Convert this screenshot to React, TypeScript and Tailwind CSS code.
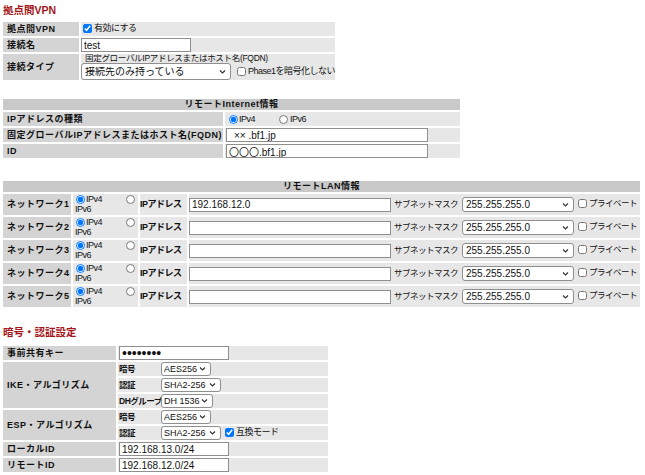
import React from 'react';

// shared cell styles
const lab = 'bg-[#d4d4d4] pl-[4px] text-[9px] font-bold tracking-[0.5px] leading-none align-middle whitespace-nowrap';
const val = 'bg-[#e7e7e7] align-middle text-[9px] tracking-[-0.5px] leading-none';
const head = 'bg-[#c9c9c9] h-[11px] text-center text-[9px] font-bold tracking-[0.5px] leading-none align-middle';
const box = 'block border border-[#8f8f8f] bg-white px-[2px] text-[10px] tracking-normal leading-none outline-none';
const title = 'flex items-center pl-[2px] text-[10.5px] font-bold text-[#a4161a] leading-none';
const sub = 'w-[43px] pl-[1px] text-[8.5px] tracking-[-0.5px] font-bold whitespace-nowrap';

const Chevron = () => (
  <svg width="7" height="5" viewBox="0 0 7 5" className="absolute right-[5px] top-1/2 -translate-y-1/2 pointer-events-none">
    <path d="M1 1l2.5 2.5L6 1" fill="none" stroke="#333" strokeWidth="1.2" />
  </svg>
);

function Sel({ value, className, small = false }: { value: string; className: string; small?: boolean }) {
  return (
    <span className={`relative inline-block shrink-0 ${className}`}>
      <select
        defaultValue={value}
        className={`appearance-none block w-full h-full border border-[#8f8f8f] rounded-[3px] bg-white leading-none tracking-normal outline-none ${small ? 'pl-[2px] pr-[11px] text-[9px]' : 'pl-[3px] pr-[14px] text-[10px]'}`}
      >
        <option>{value}</option>
      </select>
      <Chevron />
    </span>
  );
}

const Check = ({ checked = false, narrow = false, children }: { checked?: boolean; narrow?: boolean; children: React.ReactNode }) => (
  <label className={`inline-flex items-center gap-[2px] tracking-[-0.5px] leading-none whitespace-nowrap ${narrow ? 'text-[8.5px]' : 'text-[9px]'}`}>
    <input type="checkbox" defaultChecked={checked} className="w-[9px] h-[9px] m-0 accent-[#0075ff]" />
    {children}
  </label>
);

const Radio = ({ name, checked = false }: { name: string; checked?: boolean }) => (
  <input type="radio" name={name} defaultChecked={checked} className="w-[9px] h-[9px] m-0 accent-[#0075ff] shrink-0" />
);

const networks = [1, 2, 3, 4, 5];

export default function App() {
  return (
    <div className="w-[645px] h-[475px] overflow-hidden bg-white pl-[1px] text-[#111] [font-family:'Liberation_Sans','Noto_Sans_CJK_JP',sans-serif]">
      <div className={`${title} h-[20px]`}>拠点間VPN</div>

      <table className="border-separate border-spacing-[2px]">
        <tbody>
          <tr>
            <td className={`${lab} w-[76px] h-[14px]`}>拠点間VPN</td>
            <td className={`${val} w-[249px] pl-[2px]`}>
              <Check checked>有効にする</Check>
            </td>
          </tr>
          <tr>
            <td className={`${lab} h-[14px]`}>接続名</td>
            <td className={val}>
              <input defaultValue="test" className={`${box} w-[110px] h-[14px]`} />
            </td>
          </tr>
          <tr>
            <td className={`${lab} h-[26px]`}>接続タイプ</td>
            <td className={val}>
              <div className="pl-[4px] text-[8.5px] tracking-[-0.3px] leading-[9px] whitespace-nowrap">固定グローバルIPアドレスまたはホスト名(FQDN)</div>
              <div className="flex items-center gap-[6px]">
                <Sel value="接続先のみ持っている" className="w-[150px] h-[17px] text-[9px]" />
                <Check>Phase1を暗号化しない</Check>
              </div>
            </td>
          </tr>
        </tbody>
      </table>

      <table className="mt-[15px] border-separate border-spacing-[2px]">
        <tbody>
          <tr>
            <td colSpan={2} className={head}>リモートInternet情報</td>
          </tr>
          <tr>
            <td className={`${lab} w-[220px] h-[14px]`}>IPアドレスの種類</td>
            <td className={`${val} w-[235px]`}>
              <div className="flex items-center pl-[4px]">
                <Radio name="inet" checked />
                <span className="w-[41px] pl-[1px]">IPv4</span>
                <Radio name="inet" />
                <span className="pl-[2px]">IPv6</span>
              </div>
            </td>
          </tr>
          <tr>
            <td className={`${lab} h-[14px]`}>固定グローバルIPアドレスまたはホスト名(FQDN)</td>
            <td className={val}>
              <input defaultValue="×× .bf1.jp" className={`${box} ml-[1px] w-[202px] h-[14px] pl-[7px]`} />
            </td>
          </tr>
          <tr>
            <td className={`${lab} h-[14px]`}>ID</td>
            <td className={val}>
              <input defaultValue="〇〇〇.bf1.jp" className={`${box} ml-[1px] w-[202px] h-[14px] px-0`} />
            </td>
          </tr>
        </tbody>
      </table>

      <table className="mt-[19px] border-separate border-spacing-[2px]">
        <tbody>
          <tr>
            <td colSpan={4} className={head}>リモートLAN情報</td>
          </tr>
          {networks.map((n) => (
            <tr key={n}>
              <td className={`${lab} w-[68px] h-[21px]`}>ネットワーク{n}</td>
              <td className={`${val} w-[65px]`}>
                <div className="flex items-center justify-between pl-[3px] pr-[3px]">
                  <span className="flex items-center gap-[1px]">
                    <Radio name={`lan${n}`} checked />
                    IPv4
                  </span>
                  <Radio name={`lan${n}`} />
                </div>
                <div className="pl-[2px] mt-[1px]">IPv6</div>
              </td>
              <td className={`${val} w-[47px] text-[8.5px] font-bold`}>IPアドレス</td>
              <td className={`${val} w-[451px]`}>
                <div className="flex items-center">
                  <input defaultValue={n === 1 ? '192.168.12.0' : ''} className={`${box} w-[202px] h-[14px]`} />
                  <span className="ml-[3px] w-[68px] text-[8.5px] whitespace-nowrap">サブネットマスク</span>
                  <Sel value="255.255.255.0" className="w-[112px] h-[15px]" />
                  <span className="ml-[4px]">
                    <Check narrow>プライベート</Check>
                  </span>
                </div>
              </td>
            </tr>
          ))}
        </tbody>
      </table>

      <div className={`${title} mt-[11px] h-[24px]`}>暗号・認証設定</div>

      <table className="border-separate border-spacing-[2px]">
        <tbody>
          <tr>
            <td className={`${lab} w-[113px] h-[14px]`}>事前共有キー</td>
            <td className={`${val} w-[210px]`}>
              <input type="password" defaultValue="12345678" className={`${box} ml-[1px] w-[110px] h-[14px] text-[14px]`} />
            </td>
          </tr>
          <tr>
            <td rowSpan={3} className={lab}>IKE・アルゴリズム</td>
            <td className={`${val} h-[14px]`}>
              <div className="flex items-center">
                <span className={sub}>暗号</span>
                <Sel small value="AES256" className="w-[50px] h-[14px]" />
              </div>
            </td>
          </tr>
          <tr>
            <td className={`${val} h-[14px]`}>
              <div className="flex items-center">
                <span className={sub}>認証</span>
                <Sel small value="SHA2-256" className="w-[60px] h-[14px]" />
              </div>
            </td>
          </tr>
          <tr>
            <td className={`${val} h-[14px]`}>
              <div className="flex items-center">
                <span className={sub}>DHグループ</span>
                <Sel small value="DH 1536" className="w-[52px] h-[14px]" />
              </div>
            </td>
          </tr>
          <tr>
            <td rowSpan={2} className={lab}>ESP・アルゴリズム</td>
            <td className={`${val} h-[14px]`}>
              <div className="flex items-center">
                <span className={sub}>暗号</span>
                <Sel small value="AES256" className="w-[50px] h-[14px]" />
              </div>
            </td>
          </tr>
          <tr>
            <td className={`${val} h-[14px]`}>
              <div className="flex items-center">
                <span className={sub}>認証</span>
                <Sel small value="SHA2-256" className="w-[60px] h-[14px]" />
                <span className="ml-[4px]">
                  <Check checked>互換モード</Check>
                </span>
              </div>
            </td>
          </tr>
          <tr>
            <td className={`${lab} h-[14px]`}>ローカルID</td>
            <td className={val}>
              <input defaultValue="192.168.13.0/24" className={`${box} ml-[1px] w-[110px] h-[14px]`} />
            </td>
          </tr>
          <tr>
            <td className={`${lab} h-[14px]`}>リモートID</td>
            <td className={val}>
              <input defaultValue="192.168.12.0/24" className={`${box} ml-[1px] w-[110px] h-[14px]`} />
            </td>
          </tr>
        </tbody>
      </table>
    </div>
  );
}
